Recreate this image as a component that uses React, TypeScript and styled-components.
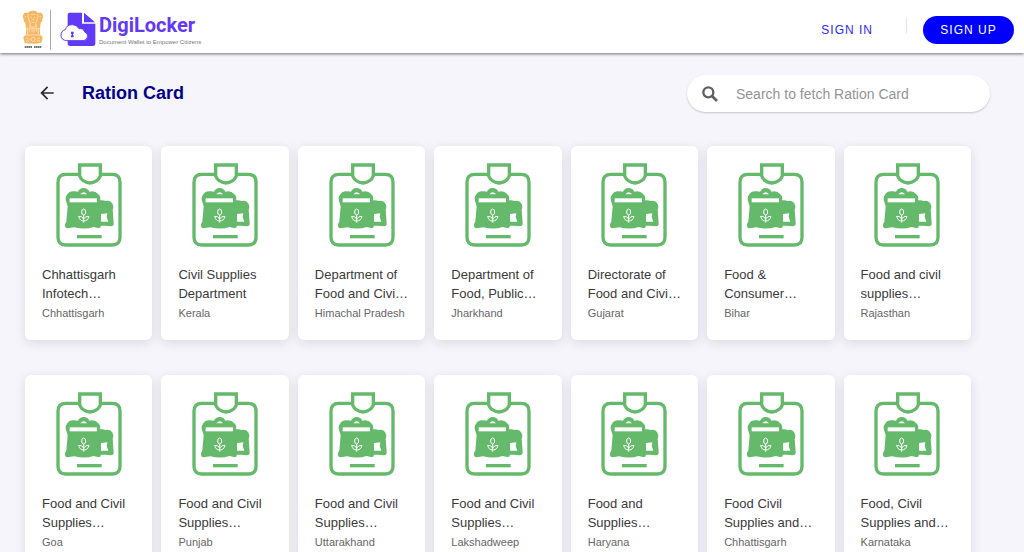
import React from "react";
import styled, { createGlobalStyle } from "styled-components";
import { MdArrowBack } from "react-icons/md";

const GlobalStyle = createGlobalStyle`
  *, *::before, *::after { box-sizing: border-box; }
  html { scrollbar-width: none; }
  body {
    margin: 0;
    background: #f6f5fb;
    font-family: "Liberation Sans", Arial, Helvetica, sans-serif;
    color: #3c3c3c;
  }
`;

const Header = styled.header`
  position: relative;
  display: flex;
  align-items: center;
  justify-content: space-between;
  height: 53px;
  padding: 0 10px 0 22px;
  background: #fff;
  box-shadow: 0 1px 3px rgba(0, 0, 0, 0.55);
`;

const Brand = styled.a`
  display: flex;
  align-items: center;
  height: 100%;
  padding-top: 6px;
  color: inherit;
  text-decoration: none;
`;

const EmblemBox = styled.span`
  display: flex;
  padding-right: 6px;
  border-right: 1px solid #aaa;
`;

const LogoMark = styled.svg`
  margin-left: 9px;
`;

const Wordmark = styled.span`
  display: flex;
  flex-direction: column;
  margin-left: 3px;
`;

const BrandName = styled.span`
  font-family: Roboto, "Arial Narrow", sans-serif;
  font-size: 20px;
  font-weight: 700;
  line-height: 26px;
  color: #613af5;
`;

const Tagline = styled.span`
  font-size: 6px;
  line-height: 9px;
  color: #777;
  white-space: nowrap;
`;

const AuthNav = styled.nav`
  display: flex;
  align-items: center;
  padding-top: 7px;
`;

const SignInLink = styled.a`
  font-size: 12px;
  line-height: 18px;
  letter-spacing: 1px;
  color: #2a2aff;
  text-decoration: none;
`;

const NavDivider = styled.span`
  align-self: flex-start;
  width: 1px;
  height: 15px;
  margin: 2px 16px 0 33px;
  background: #e4e4ec;
`;

const SignUpButton = styled.button`
  min-width: 91px;
  height: 28px;
  padding: 0 16px;
  border: 0;
  border-radius: 14px;
  background: #0000ff;
  color: #fff;
  font: inherit;
  font-size: 12px;
  letter-spacing: 1px;
`;

const TitleBar = styled.div`
  display: flex;
  align-items: center;
  justify-content: space-between;
  padding: 22px 34px 0 37px;
`;

const TitleGroup = styled.div`
  display: flex;
  align-items: center;
  gap: 25px;
  padding-bottom: 2px;
`;

const BackButton = styled.button`
  display: flex;
  padding: 0;
  border: 0;
  background: none;
  color: #2a2a2a;
`;

const Title = styled.h1`
  margin: 0;
  font-size: 18px;
  line-height: 24px;
  font-weight: 700;
  color: #00008b;
`;

const SearchBox = styled.label`
  display: flex;
  align-items: center;
  gap: 16px;
  flex: 0 0 303px;
  height: 37px;
  padding: 0 20px 0 13px;
  border-radius: 19px;
  background: #fff;
  box-shadow: 0 1px 2px rgba(0, 0, 0, 0.2);
  color: #5f5f5f;
`;

const SearchInput = styled.input`
  flex: 1;
  min-width: 0;
  padding: 0;
  border: 0;
  outline: 0;
  background: none;
  font: inherit;
  font-size: 14px;
  color: #333;

  &::placeholder {
    color: #949494;
    opacity: 1;
  }
`;

const CardGrid = styled.ul`
  display: grid;
  grid-template-columns: repeat(7, minmax(0, 1fr));
  gap: 35px 9px;
  margin: 0;
  padding: 34px 53px 34px 25px;
  list-style: none;
`;

const Card = styled.li`
  padding: 17px 17px 18px;
  border-radius: 6px;
  background: #fff;
  box-shadow: 0 3px 12px rgba(30, 25, 45, 0.12);
`;

const CardIcon = styled.svg`
  display: block;
  margin: 0 auto 18px;
`;

const CardTitle = styled.h2`
  margin: 0;
  font-size: 13px;
  line-height: 19px;
  font-weight: 400;
  color: #3a3a3a;
  white-space: nowrap;
`;

const CardState = styled.p`
  margin: 0;
  padding-top: 1px;
  font-size: 11px;
  line-height: 18px;
  color: #666;
  white-space: nowrap;
`;

function Emblem() {
  return (
    <svg width="22" height="40" viewBox="0 0 66 120" aria-label="State emblem of India">
      <g fill="#f7b65f">
        <path d="M18 9Q24 1 33 2Q42 1 48 9Q59 5 62 14Q66 20 61 26Q63 34 56 39L54 55H12L10 39Q3 34 5 26Q0 20 4 14Q7 5 18 9Z" />
        <path d="M13 55H53L55 77H11Z" />
        <path d="M7 77Q33 71 59 77L62 84L58 98Q33 104 8 98L4 84Z" />
      </g>
      <g fill="none" stroke="#fff" strokeWidth="2" opacity="0.85">
        <path d="M19 12Q16 22 21 30Q26 37 24 49M47 12Q50 22 45 30Q40 37 42 49M27 14Q33 10 39 14M26 22H30M36 22H40M29 28Q33 31 37 28M28 36Q33 39 38 36M8 20H13M53 20H58" />
        <path d="M17 53V73M25 45L22 65M41 45L44 65M30 48V68M36 48V68M49 53V73M12 75H54" />
        <circle cx="33" cy="88" r="6" />
        <path d="M13 85Q19 82 22 89M13 93H22M44 89Q48 82 54 85M44 93H54" />
      </g>
      <path d="M8 111H30M36 111H58" stroke="#444" strokeWidth="5" strokeDasharray="5 1" />
    </svg>
  );
}

function DigiLockerMark() {
  return (
    <LogoMark width="36" height="35" viewBox="0 0 108 105" aria-hidden="true">
      <path d="M29 2H66V35H106V95Q106 102 99 102H31Q23 102 23 94V9Q23 2 29 2Z" fill="#613af5" />
      <path d="M72 2L105 31H72Z" fill="#613af5" />
      <path
        d="M20 86Q3 84 3 70Q3 56 16 53Q20 38 37 38Q50 38 57 50Q70 48 74 60Q84 63 83 74Q81 86 69 86Z"
        fill="#fff"
        stroke="#613af5"
        strokeWidth="3"
      />
      <path d="M33 59H41V66H39V70H41V76H33V70H35V66H33Z" fill="#613af5" />
    </LogoMark>
  );
}

function SearchIcon() {
  return (
    <svg width="20" height="20" viewBox="0 0 60 60" fill="none" stroke="currentColor" aria-hidden="true">
      <circle cx="25" cy="25" r="15" strokeWidth="7" />
      <path d="M36 36L51 51" strokeWidth="8" />
    </svg>
  );
}

function RationCardIcon() {
  return (
    <CardIcon width="66" height="84" viewBox="18 20 196 252" aria-hidden="true">
      <g fill="none" stroke="#64b96a" strokeWidth="10">
        <path d="M88 54H46Q23 54 23 78V243Q23 266 46 266H186Q209 266 209 243V78Q209 54 186 54H150" />
        <path d="M88 26H150V59Q143 77 119 80Q95 77 88 59Z" />
        <path d="M80 241H154" />
      </g>
      <path
        d="M48 137Q43 124 50 115Q57 103 73 105L83 106Q88 95 100 95Q112 95 117 106Q135 102 143 113Q152 119 149 132Q160 131 166 134Q178 131 185 140Q192 151 187 160L190 200Q191 210 181 210L164 208L151 208Q153 215 143 215L130 212Q103 221 72 213L56 215Q44 218 44 207Q43 202 48 196L52 150Z"
        fill="#64b96a"
      />
      <g fill="#fff">
        <rect x="58" y="126" width="82" height="12" />
        <path d="M90 114Q100 101 110 114Z" />
        <path d="M152 173L171 171L169 182L174 196L152 196Z" />
      </g>
      <g fill="none" stroke="#fff" strokeWidth="3">
        <ellipse cx="100" cy="167" rx="6" ry="9" />
        <path d="M100 176V199M100 194Q88 194 85 180Q96 179 100 188Q105 179 116 180Q113 194 100 194" />
      </g>
    </CardIcon>
  );
}

interface Issuer {
  lines: [string, string];
  state: string;
}

const issuers: Issuer[] = [
  { lines: ["Chhattisgarh", "Infotech…"], state: "Chhattisgarh" },
  { lines: ["Civil Supplies", "Department"], state: "Kerala" },
  { lines: ["Department of", "Food and Civi…"], state: "Himachal Pradesh" },
  { lines: ["Department of", "Food, Public…"], state: "Jharkhand" },
  { lines: ["Directorate of", "Food and Civi…"], state: "Gujarat" },
  { lines: ["Food &", "Consumer…"], state: "Bihar" },
  { lines: ["Food and civil", "supplies…"], state: "Rajasthan" },
  { lines: ["Food and Civil", "Supplies…"], state: "Goa" },
  { lines: ["Food and Civil", "Supplies…"], state: "Punjab" },
  { lines: ["Food and Civil", "Supplies…"], state: "Uttarakhand" },
  { lines: ["Food and Civil", "Supplies…"], state: "Lakshadweep" },
  { lines: ["Food and", "Supplies…"], state: "Haryana" },
  { lines: ["Food Civil", "Supplies and…"], state: "Chhattisgarh" },
  { lines: ["Food, Civil", "Supplies and…"], state: "Karnataka" },
];

export default function App() {
  return (
    <>
      <GlobalStyle />
      <Header>
        <Brand href="#home">
          <EmblemBox>
            <Emblem />
          </EmblemBox>
          <DigiLockerMark />
          <Wordmark>
            <BrandName>DigiLocker</BrandName>
            <Tagline>Document Wallet to Empower Citizens</Tagline>
          </Wordmark>
        </Brand>
        <AuthNav>
          <SignInLink href="#signin">SIGN IN</SignInLink>
          <NavDivider />
          <SignUpButton type="button">SIGN UP</SignUpButton>
        </AuthNav>
      </Header>
      <main>
        <TitleBar>
          <TitleGroup>
            <BackButton type="button" aria-label="Back">
              <MdArrowBack size={20} />
            </BackButton>
            <Title>Ration Card</Title>
          </TitleGroup>
          <SearchBox>
            <SearchIcon />
            <SearchInput
              type="text"
              aria-label="Search to fetch Ration Card"
              placeholder="Search to fetch Ration Card"
            />
          </SearchBox>
        </TitleBar>
        <CardGrid>
          {issuers.map(({ lines, state }, index) => (
            <Card key={index}>
              <RationCardIcon />
              <CardTitle>
                {lines[0]}
                <br />
                {lines[1]}
              </CardTitle>
              <CardState>{state}</CardState>
            </Card>
          ))}
        </CardGrid>
      </main>
    </>
  );
}
